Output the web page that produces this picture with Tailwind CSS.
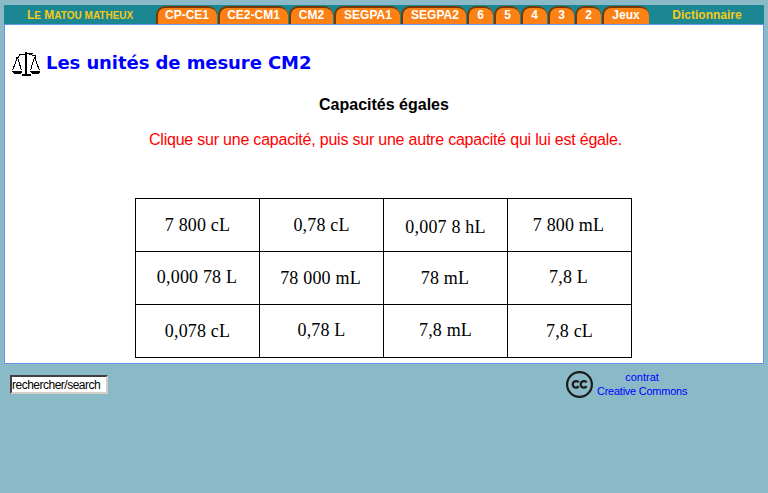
<!DOCTYPE html>
<html lang="fr">
<head>
<meta charset="utf-8">
<title>Le Matou matheux</title>
<script src="https://cdn.jsdelivr.net/npm/@tailwindcss/browser@4"></script>
</head>
<body class="h-[493px] overflow-hidden bg-[#8abac8] px-1 pt-[5px] font-['Liberation_Sans',Arial,sans-serif]">
<div class="w-[760px]">
<nav class="flex h-[19px] bg-[#1b8793] text-[12px] leading-[19px] font-bold whitespace-nowrap text-white">
  <a class="w-[152px] pl-[23px] pt-px text-[#f4ca16]">L<span class="text-[10px]">E</span> M<span class="text-[10px]">ATOU MATHEUX</span></a>
  <a class="mt-px mr-px h-[18px] w-[61px] rounded-t-[9px] border-t-2 border-l-2 border-[#753a05] bg-[#fb8114] pr-px text-center leading-[15px]">CP-CE1</a>
  <a class="mt-px mr-px h-[18px] w-[70px] rounded-t-[9px] border-t-2 border-l-2 border-[#753a05] bg-[#fb8114] pr-px text-center leading-[15px]">CE2-CM1</a>
  <a class="mt-px mr-px h-[18px] w-[44px] rounded-t-[9px] border-t-2 border-l-2 border-[#753a05] bg-[#fb8114] pr-px text-center leading-[15px]">CM2</a>
  <a class="mt-px mr-px h-[18px] w-[66px] rounded-t-[9px] border-t-2 border-l-2 border-[#753a05] bg-[#fb8114] text-center leading-[15px]">SEGPA1</a>
  <a class="mt-px mr-px h-[18px] w-[65px] rounded-t-[9px] border-t-2 border-l-2 border-[#753a05] bg-[#fb8114] pl-px text-center leading-[15px]">SEGPA2</a>
  <a class="mt-px mr-px h-[18px] w-[26px] rounded-t-[9px] border-t-2 border-l-2 border-[#753a05] bg-[#fb8114] pr-px text-center leading-[15px]">6</a>
  <a class="mt-px mr-px h-[18px] w-[26px] rounded-t-[9px] border-t-2 border-l-2 border-[#753a05] bg-[#fb8114] pr-px text-center leading-[15px]">5</a>
  <a class="mt-px mr-px h-[18px] w-[26px] rounded-t-[9px] border-t-2 border-l-2 border-[#753a05] bg-[#fb8114] pr-px text-center leading-[15px]">4</a>
  <a class="mt-px mr-px h-[18px] w-[26px] rounded-t-[9px] border-t-2 border-l-2 border-[#753a05] bg-[#fb8114] pr-px text-center leading-[15px]">3</a>
  <a class="mt-px mr-px h-[18px] w-[26px] rounded-t-[9px] border-t-2 border-l-2 border-[#753a05] bg-[#fb8114] pr-px text-center leading-[15px]">2</a>
  <a class="mt-px h-[18px] w-[47px] rounded-t-[9px] border-t-2 border-l-2 border-[#753a05] bg-[#fb8114] pr-px text-center leading-[15px]">Jeux</a>
  <a class="flex-1 text-center pt-px pl-px text-[#f4ca16]">Dictionnaire</a>
</nav>
<main class="h-[340px] border border-[#6495ed] bg-white">
  <h1 class="flex h-[70px] items-start pt-[26px] pl-[7px] font-['DejaVu_Sans',Verdana,sans-serif] text-[18px] leading-[24px] font-bold tracking-[-0.07px] whitespace-nowrap text-[#0000ff]">
    <svg class="mt-px mr-[6px] h-[25px] w-[28px] shrink-0" viewBox="0 0 28 25" fill="none" stroke="#000" shape-rendering="crispEdges">
      <path d="M13 0h2v23h-2z" fill="#000" stroke="none"/>
      <path d="M4 5.500h2l2-3.500h5l2-1h6M15 1.500l5 1.500h3l1 2.500"/>
      <path d="M5.500 5L.5 18.500M5.500 5L9.500 18.500M22.500 5L18.500 18.500M22.500 5L27.500 18.500"/>
      <path d="M0 19h10v1l-2 2H2l-2-2zM18 19h10v1l-2 2h-6l-2-2zM10 22h9v2h-9z" fill="#000" stroke="none"/>
    </svg>
    <span>Les unités de mesure CM2</span>
  </h1>
  <h2 class="text-center text-[16px] leading-[20px] font-bold">Capacités égales</h2>
  <p class="mt-[15px] pl-[3px] text-center text-[16px] leading-[20px] tracking-[-0.215px] whitespace-nowrap text-[#ff0000]">Clique sur une capacité, puis sur une autre capacité qui lui est égale.</p>
  <div class="mt-[48px] ml-[130px] grid h-[160px] w-[497px] grid-cols-[repeat(4,123px)] grid-rows-[repeat(3,52px)] gap-px border border-black bg-black text-center font-['Liberation_Serif','Times_New_Roman',serif] text-[18px] leading-[52px] tracking-[0.18px] whitespace-nowrap text-black *:bg-white">
    <div class="pt-px leading-[51px]">7 800 cL</div><div class="pt-px leading-[51px]">0,78 cL</div><div class="pt-[4px] leading-[48px]">0,007 8 hL</div><div class="pt-px pr-[2px] leading-[51px]">7 800 mL</div>
    <div class="pr-px leading-[50px]">0,000 78 L</div><div class="pr-[2px]">78 000 mL</div><div class="pr-px">78 mL</div><div class="pr-[2px] leading-[50px]">7,8 L</div>
    <div>0,078 cL</div><div class="leading-[50px]">0,78 L</div><div class="leading-[50px]">7,8 mL</div><div>7,8 cL</div>
  </div>
</main>
<footer class="flex h-[50px]">
  <input class="mt-[11px] ml-[6px] h-[19px] w-[98px] border-2 border-t-[#404040] border-r-[#d4d0c8] border-b-[#d4d0c8] border-l-[#404040] bg-white text-[12px] tracking-[-0.5px] text-black" value="rechercher/search" aria-label="rechercher">
  <svg class="mt-[7px] ml-[458px] h-[27px] w-[27px] shrink-0" viewBox="0 0 27 27" fill="none" stroke="#1b1b1b">
    <circle cx="13.500" cy="13.500" r="12.400" stroke-width="2.200"/>
    <path d="M12.700 11.400A3.300 3.300 0 1 0 12.700 15.300M20.600 11.400A3.300 3.300 0 1 0 20.600 15.300" stroke-width="2.300"/>
  </svg>
  <a class="mt-[6px] ml-[4px] w-[90px] text-center text-[11px] leading-[14px] tracking-[-0.25px] whitespace-nowrap text-[#0000ff]"><span class="tracking-normal">contrat</span><br>Creative Commons</a>
</footer>
</div>
</body>
</html>
